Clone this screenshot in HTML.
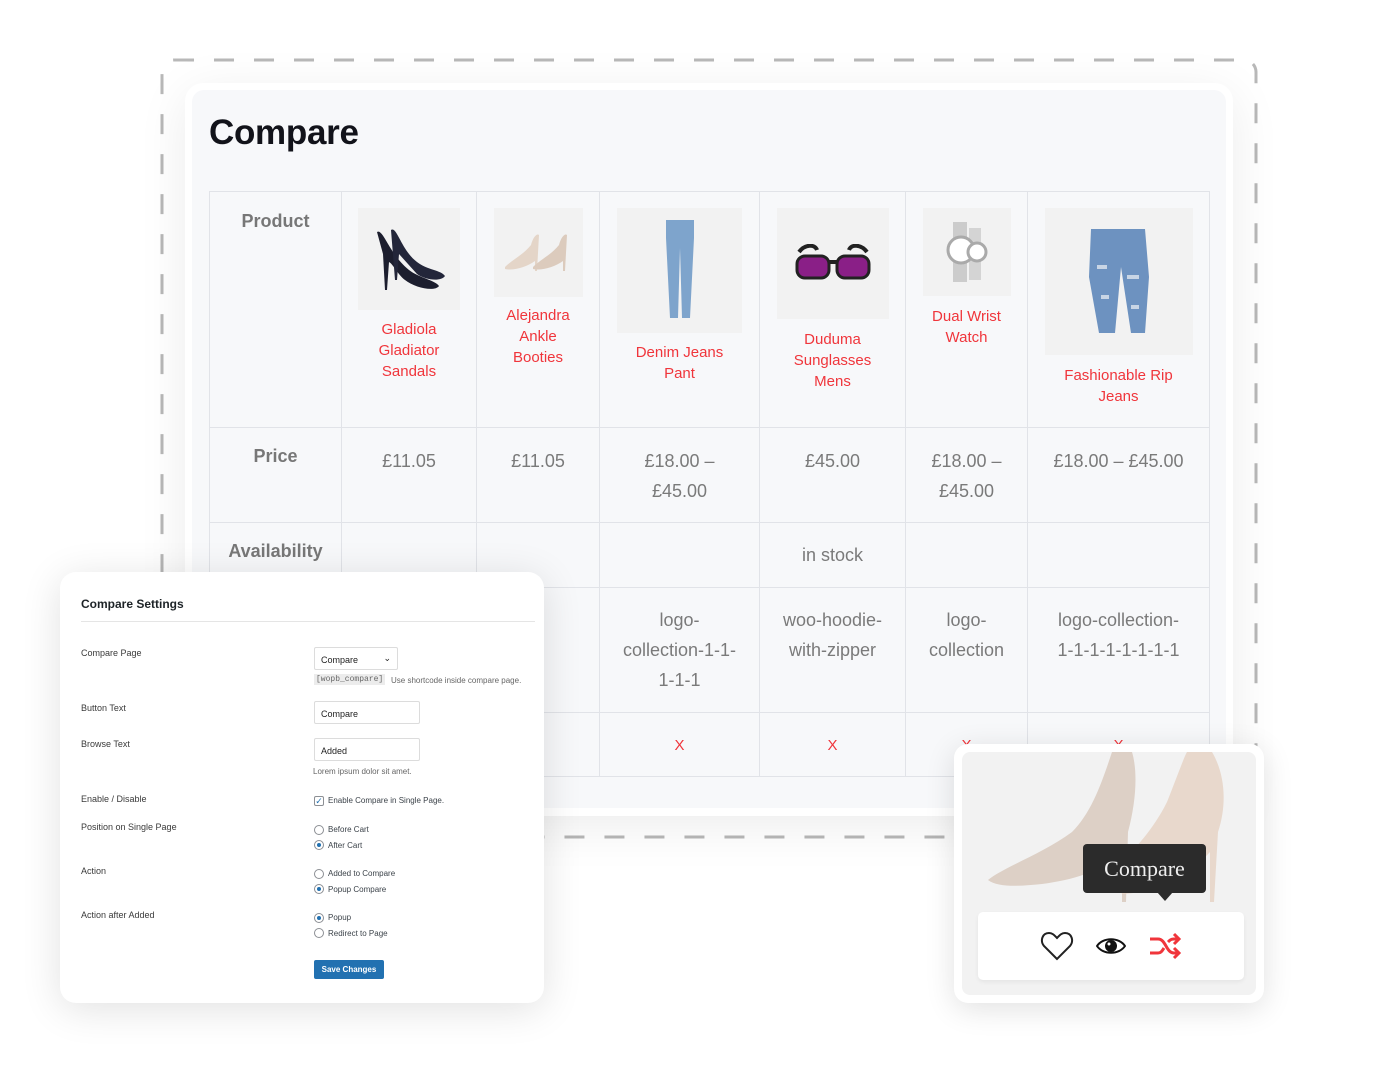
<!DOCTYPE html>
<html><head><meta charset="utf-8">
<style>
*{margin:0;padding:0;box-sizing:border-box}
body{width:1384px;height:1084px;background:#fff;position:relative;overflow:hidden;font-family:"Liberation Sans",Arial,sans-serif}
.abs{position:absolute}
#card{left:185px;top:83px;width:1048px;height:733px;background:#fff;border-radius:18px;box-shadow:0 10px 50px rgba(0,0,0,.08)}
#inner{left:192px;top:90px;width:1034px;height:718px;background:#f7f8fa;border-radius:12px}
h1{position:absolute;left:209px;top:113px;font-size:35px;font-weight:bold;color:#12131a;letter-spacing:-0.3px}
table{position:absolute;left:209px;top:191px;border-collapse:collapse;table-layout:fixed}
td{border:1px solid #e1e3e8;text-align:center;vertical-align:top;color:#7a7a7a;font-size:18px;line-height:30px}
td.h{font-weight:bold;color:#777;font-size:18px}
.pn{color:#f0353b;font-size:15px;line-height:21px}
.img{background:#f2f2f2;margin:0 auto;display:flex;align-items:center;justify-content:center}
.x{color:#f0353b;font-size:15px}
#set{left:60px;top:572px;width:484px;height:431px;background:#fff;border-radius:16px;box-shadow:0 6px 40px rgba(0,0,0,.12);font-size:9px;color:#333}
#set .t{position:absolute}
.lab{left:21px;color:#3a3a3a}
.inp{position:absolute;left:254px;background:#fff;border:1px solid #dcdcdc;border-radius:2px;height:23px;padding:7px 0 0 6px;font-size:9px;color:#222}
.rad{position:absolute;left:254px;width:10px;height:10px;border:1px solid #8c8f94;border-radius:50%;background:#fff}
.rad.on::after{content:"";position:absolute;left:2px;top:2px;width:4px;height:4px;border-radius:50%;background:#2271b1}
.rl{position:absolute;left:268px;font-size:8px;color:#3c434a}
#pop{left:954px;top:744px;width:310px;height:259px;background:#fff;border-radius:14px;box-shadow:0 6px 30px rgba(0,0,0,.12)}
</style></head><body>
<svg class="abs" style="left:0;top:0" width="1384" height="1084">
<rect x="162" y="60" width="1094" height="777" rx="12" fill="none" stroke="#b8b8b8" stroke-width="3" stroke-dasharray="20 20"/>
</svg>
<div id="card" class="abs"></div>
<div id="inner" class="abs"></div>
<h1>Compare</h1>
<table>
<colgroup><col style="width:132px"><col style="width:135px"><col style="width:123px"><col style="width:160px"><col style="width:146px"><col style="width:122px"><col style="width:182px"></colgroup>
<tr style="height:236px">
<td class="h" style="padding-top:14px">Product</td>
<td style="padding-top:16px"><div class="img" style="width:102px;height:102px"><svg width="80" height="70" viewBox="0 0 80 70"><path d="M8 8 C14 4 20 30 40 46 C50 54 66 56 70 62 C66 68 46 64 36 56 C30 52 24 40 20 38 L18 66 L16 66 L14 30 Z" fill="#1c1e2e"/><path d="M22 6 C28 2 32 26 48 38 C58 46 72 46 76 52 C72 58 56 56 48 50 L30 30 L28 56 L26 56 Z" fill="#23263a"/></svg></div><div class="pn" style="margin-top:9px">Gladiola<br>Gladiator<br>Sandals</div></td>
<td style="padding-top:16px"><div class="img" style="width:89px;height:89px"><svg width="70" height="44" viewBox="0 0 70 44"><path d="M2 36 C10 28 20 24 28 14 C30 6 34 2 36 4 L34 40 L32 40 L32 30 C24 36 10 40 2 38Z" fill="#e4d5c8"/><path d="M30 36 C38 28 48 24 56 14 C58 6 62 2 64 4 L62 40 L60 40 L60 30 C52 36 38 40 30 38Z" fill="#dccbbd"/></svg></div><div class="pn" style="margin-top:8px">Alejandra<br>Ankle<br>Booties</div></td>
<td style="padding-top:16px"><div class="img" style="width:125px;height:125px"><svg width="40" height="105" viewBox="0 0 40 105"><path d="M6 2 H34 L34 20 L30 100 H22 L20 30 L18 100 H10 L6 20Z" fill="#7ea4cc"/></svg></div><div class="pn" style="margin-top:9px">Denim Jeans<br>Pant</div></td>
<td style="padding-top:16px"><div class="img" style="width:112px;height:111px"><svg width="76" height="40" viewBox="0 0 76 40"><path d="M4 8 C10 0 20 0 22 6 M72 8 C66 0 56 0 54 6" stroke="#222" stroke-width="4" fill="none"/><rect x="2" y="12" width="32" height="22" rx="8" fill="#8a1f87" stroke="#222" stroke-width="3"/><rect x="42" y="12" width="32" height="22" rx="8" fill="#8a1f87" stroke="#222" stroke-width="3"/><path d="M34 18 H42" stroke="#222" stroke-width="4"/></svg></div><div class="pn" style="margin-top:10px">Duduma<br>Sunglasses<br>Mens</div></td>
<td style="padding-top:16px"><div class="img" style="width:88px;height:88px"><svg width="44" height="60" viewBox="0 0 44 60"><rect x="8" y="0" width="14" height="60" fill="#ccc"/><rect x="24" y="6" width="12" height="52" fill="#d4d4d4"/><circle cx="16" cy="28" r="13" fill="#fff" stroke="#aaa" stroke-width="3"/><circle cx="32" cy="30" r="9" fill="#fff" stroke="#aaa" stroke-width="3"/></svg></div><div class="pn" style="margin-top:10px">Dual Wrist<br>Watch</div></td>
<td style="padding-top:16px"><div class="img" style="width:148px;height:147px"><svg width="64" height="110" viewBox="0 0 64 110"><path d="M4 2 H58 L62 50 L58 106 H44 L34 40 L28 106 H12 L2 50Z" fill="#6d92c0"/><path d="M10 40h10M40 50h12M14 70h8M44 80h8" stroke="#c8d5e5" stroke-width="4"/></svg></div><div class="pn" style="margin-top:10px">Fashionable Rip<br>Jeans</div></td>
</tr>
<tr style="height:95px">
<td class="h" style="padding-top:13px">Price</td>
<td style="padding-top:18px">£11.05</td><td style="padding-top:18px">£11.05</td><td style="padding-top:18px">£18.00 –<br>£45.00</td><td style="padding-top:18px">£45.00</td><td style="padding-top:18px">£18.00 –<br>£45.00</td><td style="padding-top:18px">£18.00 – £45.00</td>
</tr>
<tr style="height:65px">
<td class="h" style="padding-top:13px">Availability</td><td></td><td></td><td></td><td style="padding-top:17px">in stock</td><td></td><td></td>
</tr>
<tr style="height:125px">
<td></td><td style="padding-top:17px">logo-<br>variant-1</td><td style="padding-top:17px;color:#fff">-</td><td style="padding-top:17px">logo-<br>collection-1-1-<br>1-1-1</td><td style="padding-top:17px">woo-hoodie-<br>with-zipper</td><td style="padding-top:17px">logo-<br>collection</td><td style="padding-top:17px">logo-collection-<br>1-1-1-1-1-1-1-1</td>
</tr>
<tr style="height:64px">
<td></td><td></td><td></td><td class="x" style="padding-top:18px">X</td><td class="x" style="padding-top:18px">X</td><td class="x" style="padding-top:18px">X</td><td class="x" style="padding-top:18px">X</td>
</tr>
</table>

<div id="set" class="abs">
<div class="t" style="left:21px;top:25px;font-size:12px;font-weight:bold;color:#1d2327">Compare Settings</div>
<div class="t" style="left:21px;top:49px;width:454px;height:1px;background:#e5e5e5"></div>
<div class="t lab" style="top:76px">Compare Page</div>
<div class="inp" style="top:75px;width:84px">Compare<span style="position:absolute;right:6px;top:5px;font-size:9px">&#8964;</span></div>
<div class="t" style="left:254px;top:102px;background:#ececec;font-family:'Liberation Mono',monospace;font-size:8px;color:#666;padding:1px 2px">[wopb_compare]</div>
<div class="t" style="left:331px;top:104px;font-size:8px;color:#666">Use shortcode inside compare page.</div>
<div class="t lab" style="top:131px">Button Text</div>
<div class="inp" style="top:129px;width:106px">Compare</div>
<div class="t lab" style="top:167px">Browse Text</div>
<div class="inp" style="top:166px;width:106px">Added</div>
<div class="t" style="left:253px;top:195px;font-size:8px;color:#666">Lorem ipsum dolor sit amet.</div>
<div class="t lab" style="top:222px">Enable / Disable</div>
<div class="rad" style="top:224px;border-radius:2px;font-size:9px;color:#2271b1;line-height:8px;text-align:center">&#10003;</div>
<div class="rl" style="top:224px">Enable Compare in Single Page.</div>
<div class="t lab" style="top:250px">Position on Single Page</div>
<div class="rad" style="top:253px"></div><div class="rl" style="top:253px">Before Cart</div>
<div class="rad on" style="top:268px"></div><div class="rl" style="top:269px">After Cart</div>
<div class="t lab" style="top:294px">Action</div>
<div class="rad" style="top:297px"></div><div class="rl" style="top:297px">Added to Compare</div>
<div class="rad on" style="top:312px"></div><div class="rl" style="top:313px">Popup Compare</div>
<div class="t lab" style="top:338px">Action after Added</div>
<div class="rad on" style="top:341px"></div><div class="rl" style="top:341px">Popup</div>
<div class="rad" style="top:356px"></div><div class="rl" style="top:357px">Redirect to Page</div>
<div class="t" style="left:254px;top:388px;width:70px;height:19px;background:#2271b1;border-radius:2px;color:#fff;font-size:8px;font-weight:bold;text-align:center;line-height:19px">Save Changes</div>
</div>

<div id="pop" class="abs">
<div class="abs" style="left:8px;top:8px;width:294px;height:243px;background:#f2f2f2;border-radius:8px;overflow:hidden">
<svg width="294" height="170" viewBox="0 0 294 170"><path d="M26 128 C40 116 80 102 110 80 C130 60 140 30 150 0 L170 0 C176 20 174 50 166 80 L164 150 L160 150 L160 100 C140 120 110 128 80 132 C60 134 36 136 26 128Z" fill="#ddd0c6"/><path d="M150 120 C170 100 190 80 205 50 C215 25 222 5 225 0 L250 0 C262 20 266 50 256 80 L252 150 L248 150 L248 100 C230 120 200 140 160 142Z" fill="#e8d8cc"/></svg>
</div>
<div class="abs" style="left:129px;top:100px;width:123px;height:49px;background:#2b2b2b;border-radius:4px;color:#eee;font-family:'Liberation Serif',serif;font-size:22px;text-align:center;line-height:49px">Compare</div>
<div class="abs" style="left:203px;top:148px;width:0;height:0;border-left:8px solid transparent;border-right:8px solid transparent;border-top:9px solid #2b2b2b"></div>
<div class="abs" style="left:24px;top:168px;width:266px;height:68px;background:#fff;border-radius:5px;box-shadow:0 2px 4px rgba(0,0,0,.06)">
<svg class="abs" style="left:62px;top:18px" width="34" height="32" viewBox="0 0 34 32"><path d="M17 29 L4 16 C0 11 2 3 9 3 C13 3 15 6 17 8 C19 6 21 3 25 3 C32 3 34 11 30 16 Z" fill="none" stroke="#222" stroke-width="2"/></svg>
<svg class="abs" style="left:118px;top:25px" width="30" height="18" viewBox="0 0 30 18"><path d="M1 9 C7 0 23 0 29 9 C23 18 7 18 1 9Z" fill="none" stroke="#111" stroke-width="2"/><circle cx="15" cy="9" r="6" fill="#111"/><circle cx="13" cy="7" r="1.5" fill="#fff"/></svg>
<svg class="abs" style="left:170px;top:20px" width="34" height="28" viewBox="0 0 34 28"><path d="M2 7 H10 C18 7 18 21 26 21 H30 M2 21 H10 C13 21 14 19 16 16 M20 10 C22 8 23 7 26 7 H30 M26 2 L31 7 L26 12 M26 16 L31 21 L26 26" fill="none" stroke="#f0353b" stroke-width="3"/></svg>
</div>
</div>
</body></html>
